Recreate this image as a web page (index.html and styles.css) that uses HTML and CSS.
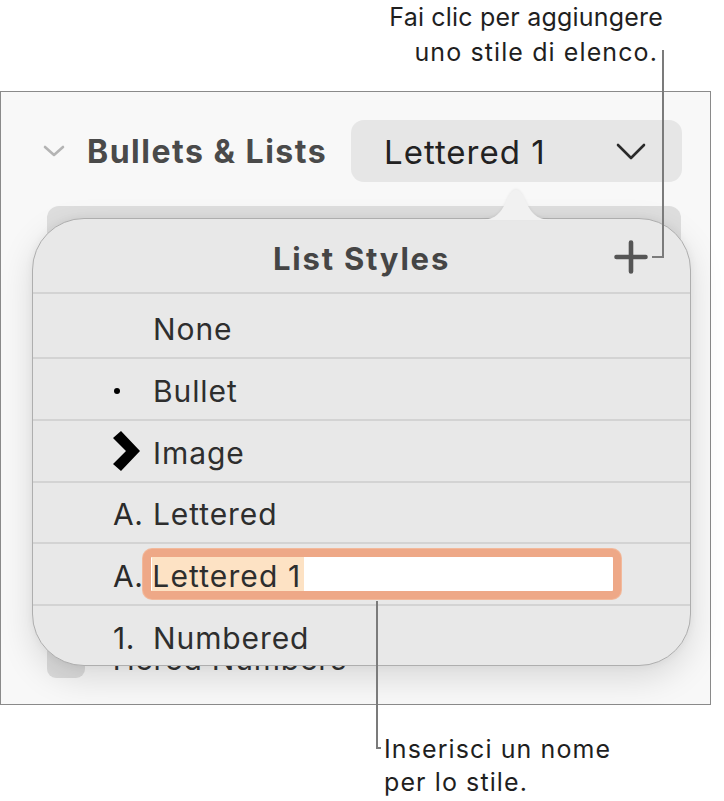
FILE: index.html
```html
<!DOCTYPE html>
<html lang="it">
<head>
<meta charset="utf-8">
<title>List Styles</title>
<link rel="stylesheet" href="styles.css">
</head>
<body>
<div class="page">
  <div class="callout-top">
    <p><span class="ln ln1">Fai clic per aggiungere</span><span class="ln">uno stile di elenco.</span></p>
  </div>

  <div class="panel">
    <div class="header">
      <svg class="collapse" width="22" height="12" viewBox="0 0 22 12"><polyline points="2,2 11,10 20,2" fill="none" stroke="#b4b4b4" stroke-width="2.6" stroke-linecap="round" stroke-linejoin="round"/></svg>
      <div class="title">Bullets &amp; Lists</div>
      <div class="dropdown">
        <span>Lettered 1</span>
        <svg width="30" height="17" viewBox="0 0 30 17"><polyline points="2,2 15,15 28,2" fill="none" stroke="#2a2a2a" stroke-width="2.6" stroke-linecap="round" stroke-linejoin="round"/></svg>
      </div>
    </div>
    <div class="bg-box"></div>
    <div class="tiered">
      <span class="checkbox"></span>
      <span class="tiered-label">Tiered Numbers</span>
    </div>

    <div class="popover">
      <svg class="arrow" width="76" height="31" viewBox="0 0 76 31"><path d="M0,31 C14,31 21,28 28,13 C32,4 35,1 38,1 C41,1 44,4 48,13 C55,28 62,31 76,31 Z" fill="#f1f1f1"/></svg>
      <div class="pop-head">
        <span class="pop-title">List Styles</span>
        <svg class="plus" width="34" height="34" viewBox="0 0 34 34"><path d="M17 2.5 V31.5 M2.5 17 H31.5" stroke="#555" stroke-width="4.6" stroke-linecap="round"/></svg>
      </div>
      <div class="row r1"><span class="marker"></span><span class="label">None</span></div>
      <div class="row r2"><span class="marker"><span class="dot"></span></span><span class="label">Bullet</span></div>
      <div class="row r3"><span class="marker"><svg width="28" height="40" viewBox="0 0 28 40"><polygon points="0,7 8,0 27,20 8,40 0,33 13,20" fill="#000"/></svg></span><span class="label">Image</span></div>
      <div class="row r4"><span class="marker">A.</span><span class="label">Lettered</span></div>
      <div class="row r5"><span class="marker short">A.</span><span class="field"><span class="sel">Lettered 1</span></span></div>
      <div class="row r6"><span class="marker">1.</span><span class="label">Numbered</span></div>
    </div>
  </div>

  <div class="callout-bottom">
    <p>Inserisci un nome<br>per lo stile.</p>
  </div>

  <div class="line line-top-v"></div>
  <div class="line line-top-h"></div>
  <div class="line line-bot-v"></div>
  <div class="line line-bot-h"></div>
</div>
</body>
</html>
```

FILE: styles.css
```css
* { box-sizing: border-box; }
html, body { margin: 0; padding: 0; background: #ffffff; }
body { font-family: Inter, "Noto Sans", sans-serif; color: #222; }
.page { position: relative; width: 724px; height: 801px; overflow: hidden; }

.callout-top { height: 91px; display: flex; justify-content: flex-end; padding-right: 67px; }
.callout-top p, .callout-bottom p {
  margin: 0; font-size: 25px; line-height: 35px; color: #1f1f1f; letter-spacing: 1.1px;
  white-space: nowrap;
}
.callout-top p { text-align: right; margin-right: -1px; }
.callout-top .ln { display: block; }
.callout-top .ln1 { letter-spacing: 0.2px; margin-right: -5px; }

.panel {
  position: relative; width: 711px; height: 614px;
  border: 1px solid #8a8a8a; background: #f8f8f8;
}
.header { display: flex; align-items: center; height: 62px; margin-top: 28px; padding-left: 42px; }
.collapse { flex: 0 0 22px; margin-right: 22px; }
.title { flex: 0 0 264px; font-size: 32px; font-weight: 700; color: #4a4a4a; letter-spacing: 1.5px; }
.dropdown {
  flex: 0 0 331px; height: 62px; border-radius: 13px; background: #e6e6e6;
  display: flex; align-items: center; justify-content: space-between;
  padding: 0 36px 0 33px; font-size: 33px; color: #222; letter-spacing: 1px;
}
.dropdown span { margin-top: 2px; }
.bg-box {
  margin: 24px 0 0 46px; width: 634px; height: 120px; border-radius: 12px;
  background: #dedede;
}
.tiered { display: flex; align-items: flex-end; margin: 310px 0 0 46px; height: 42px; }
.checkbox { width: 38px; height: 42px; border-radius: 9px; background: #dcdcdc; }
.tiered-label { margin-left: 22px; font-size: 30px; line-height: 30px; color: #333; letter-spacing: 0.8px; margin-bottom: 4px; }

.popover {
  position: absolute; left: 31px; top: 126px; width: 659px; height: 448px;
  border: 1px solid #aeaeae; border-radius: 52px; background: #e8e8e8;
  box-shadow: 0 12px 34px rgba(0,0,0,0.13), 0 0 8px rgba(0,0,0,0.05);
}
.arrow { position: absolute; left: 445px; top: -30px; filter: drop-shadow(0 -1px 1px rgba(0,0,0,0.06)); }
.pop-head { height: 73px; position: relative; display: flex; align-items: center; justify-content: center; }
.pop-title { font-size: 31px; font-weight: 700; color: #454545; letter-spacing: 1.8px; margin-top: 6px; }
.plus { position: absolute; right: 42px; top: 21px; }

.row { display: flex; align-items: center; border-top: 2px solid #d3d3d3; height: 62px; padding: 3px 0 0 80px; font-size: 30px; color: #2e2e2e; }
.r1 { height: 65px; padding-top: 6px; }
.r4 { height: 61px; }
.marker { flex: 0 0 40px; display: flex; align-items: center; color: #2a2a2a; letter-spacing: 0.5px; }
.r3 .marker { margin-top: -3px; }
.marker.short { flex: 0 0 30px; }
.dot { width: 6px; height: 6px; border-radius: 50%; background: #000; margin-left: 1px; }
.label { letter-spacing: 0.9px; }
.field {
  width: 478px; height: 50px; margin-top: -3px; border: 8px solid #eea887; border-radius: 9px; background: #fff;
  box-shadow: 0 0 0 1px #f2b99b; display: flex; align-items: stretch; padding-left: 1px;
}
.sel { background: #fde2c4; display: flex; align-items: center; padding: 3px 3px 0 0; letter-spacing: 1.1px; }

.callout-bottom { padding: 28px 0 0 384px; }
.callout-bottom p { line-height: 33px; }

.line { position: absolute; background: #7b7b7b; }
.line-top-v { left: 662px; top: 50px; width: 2px; height: 208px; }
.line-top-h { left: 652px; top: 256px; width: 12px; height: 2px; }
.line-bot-v { left: 376px; top: 601px; width: 2px; height: 148px; }
.line-bot-h { left: 376px; top: 747px; width: 5px; height: 2px; }
```
